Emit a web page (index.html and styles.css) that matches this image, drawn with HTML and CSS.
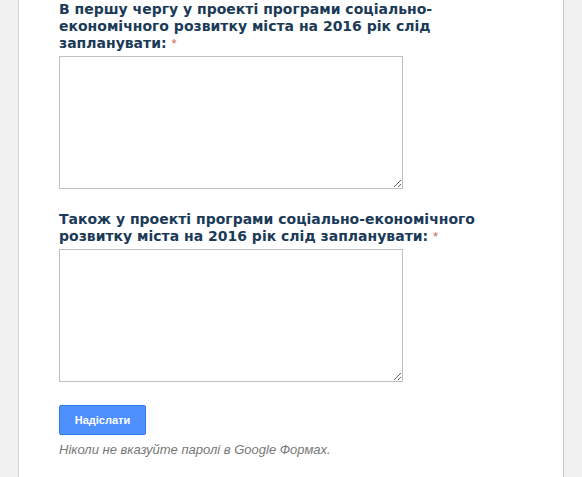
FILE: index.html
```html
<!DOCTYPE html>
<html lang="uk">
  <head>
    <meta charset="UTF-8" />
    <title>Форма</title>
    <link rel="stylesheet" href="styles.css">
  </head>
  <body>
    <div class="page">
      <div class="panel">
        <form class="form">
          <div class="item">
            <label class="item-title" for="q1">В першу чергу у проекті програми соціально-економічного розвитку міста на 2016 рік слід запланувати: <span class="required">*</span></label>
            <textarea id="q1" class="answer"></textarea>
          </div>
          <div class="item">
            <label class="item-title" for="q2">Також у проекті програми соціально-економічного розвитку міста на 2016 рік слід запланувати: <span class="required">*</span></label>
            <textarea id="q2" class="answer"></textarea>
          </div>
          <div class="submit-row">
            <button type="button" class="submit">Надіслати</button>
          </div>
          <div class="password-warning">Ніколи не вказуйте паролі в Google Формах.</div>
        </form>
      </div>
    </div>
  </body>
</html>
```
FILE: styles.css
```css
* {
  box-sizing: border-box;
}
body {
  margin: 0;
  background: #f1f1f1;
  font-family: 'DejaVu Sans', Verdana, sans-serif;
}
.page {
  padding: 0 18px 0 18px;
  width: 582px;
}
.panel {
  width: 546px;
  min-height: 477px;
  background: #fff;
  border-left: 1px solid #d4d4d4;
  border-right: 1px solid #c8c8c8;
  padding: 1px 0 20px 40px;
}
.item {
  margin-bottom: 22px;
}
.item-title {
  display: block;
  font-size: 14px;
  font-weight: bold;
  line-height: 17px;
  color: #1b3a57;
  width: 430px;
  margin-bottom: 4px;
}
.required {
  color: #d0694f;
  font-family: 'Liberation Sans', Arial, sans-serif;
  font-size: 13px;
  font-weight: normal;
  line-height: 1;
}
.answer {
  display: block;
  width: 344px;
  height: 133px;
  border: 1px solid #c0c0c0;
  border-radius: 0;
  padding: 2px;
  margin: 0;
  font-family: 'Liberation Sans', Arial, sans-serif;
  font-size: 13px;
}
.submit-row {
  padding-top: 1px;
}
.submit {
  width: 87px;
  height: 30px;
  border: 1px solid #3079ed;
  border-radius: 2px;
  background: #4d90fe;
  color: #fff;
  font-family: 'Liberation Sans', Arial, sans-serif;
  font-size: 11px;
  font-weight: bold;
  cursor: pointer;
}
.password-warning {
  margin-top: 7px;
  font-family: 'Liberation Sans', Arial, sans-serif;
  font-size: 13px;
  font-style: italic;
  color: #777;
}
```
